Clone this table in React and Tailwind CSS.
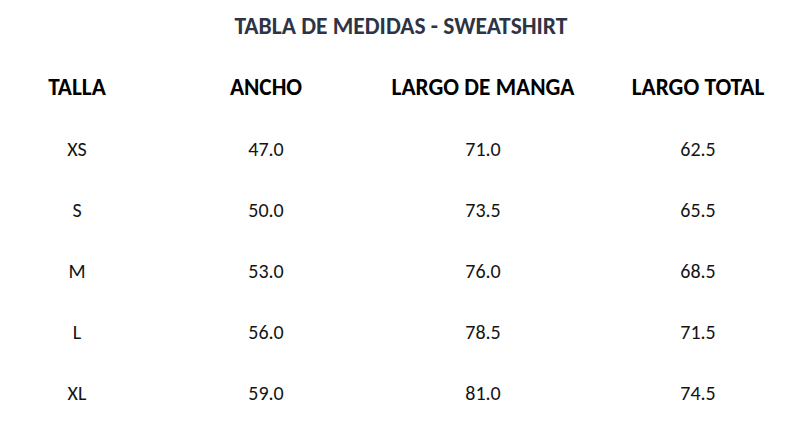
const headers = ["TALLA", "ANCHO", "LARGO DE MANGA", "LARGO TOTAL"];

const rows = [
  ["XS", "47.0", "71.0", "62.5"],
  ["S", "50.0", "73.5", "65.5"],
  ["M", "53.0", "76.0", "68.5"],
  ["L", "56.0", "78.5", "71.5"],
  ["XL", "59.0", "81.0", "74.5"],
];

export default function App() {
  return (
    <div className="h-[427px] w-[808px] bg-white font-['Carlito','Open_Sans',sans-serif]">
      {/* title */}
      <div className="flex h-[57px] items-center justify-center pb-[3px] pr-[6px]">
        <h1 className="text-[23.5px] font-bold text-[#2c3445]">
          TABLA DE MEDIDAS - SWEATSHIRT
        </h1>
      </div>

      <div className="grid grid-cols-[154px_224px_210px_220px]">
        {headers.map((h) => (
          <div
            key={h}
            className="flex h-[61px] items-center justify-center text-[23.3px] font-bold text-black"
          >
            {h}
          </div>
        ))}
        {rows.map((r) =>
          r.map((v, i) => (
            <div
              key={r[0] + i}
              className="flex h-[61px] items-center justify-center text-[20px] text-[#141414]"
            >
              {v}
            </div>
          ))
        )}
      </div>
    </div>
  );
}
